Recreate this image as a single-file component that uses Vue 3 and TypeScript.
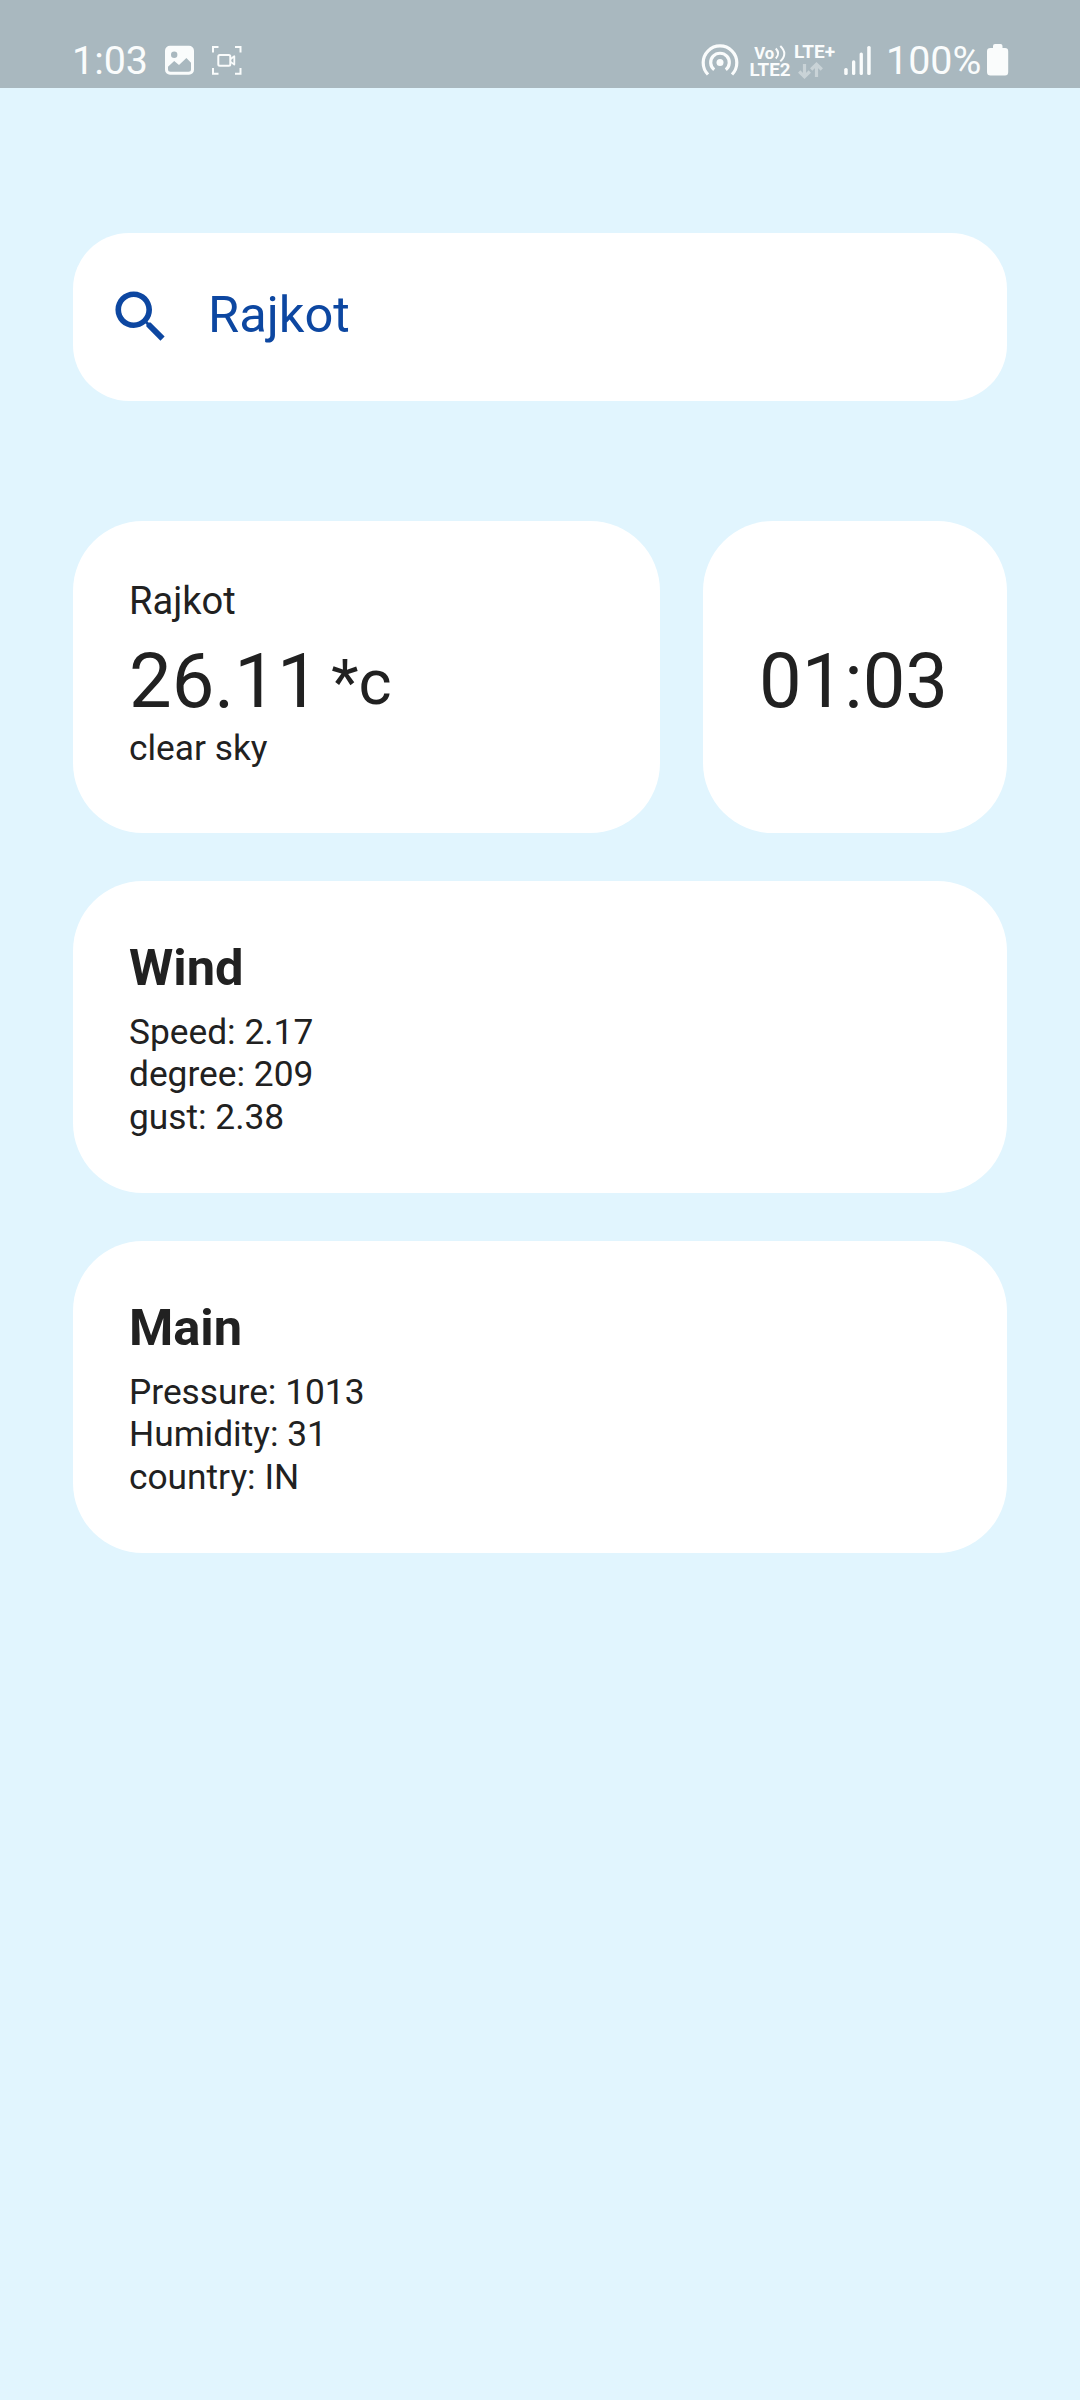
<script setup lang="ts">
interface InfoCard {
  title: string
  rows: { label: string; value: string }[]
}

const city = 'Rajkot'
const temperature = '26.11'
const sky = 'clear sky'
const clock = '01:03'

const cards: InfoCard[] = [
  {
    title: 'Wind',
    rows: [
      { label: 'Speed', value: '2.17' },
      { label: 'degree', value: '209' },
      { label: 'gust', value: '2.38' },
    ],
  },
  {
    title: 'Main',
    rows: [
      { label: 'Pressure', value: '1013' },
      { label: 'Humidity', value: '31' },
      { label: 'country', value: 'IN' },
    ],
  },
]
</script>

<template>
  <div class="screen">
    <header class="status">
      <div class="status-left">
        <span class="status-text time">1:03</span>
        <svg class="ic-photo" width="30" height="30" viewBox="0 0 30 30">
          <path
            fill="currentColor"
            fill-rule="evenodd"
            d="M5 .8h19a5 5 0 0 1 5 5v19a5 5 0 0 1-5 5H5a5 5 0 0 1-5-5v-19a5 5 0 0 1 5-5zM9.200 6.500a3.200 3.200 0 1 0 0 6.400a3.200 3.200 0 0 0 0-6.400zM3 21.800v2.500q0 2.500 2.500 2.500h18q2.500 0 2.500-2.500v-6.500l-4.600-4.700-7.400 7-4.800-4z"
          />
        </svg>
        <svg class="ic-record" width="30" height="30" viewBox="0 0 30 30" fill="none" stroke="currentColor" stroke-width="2">
          <path d="M1 7.500V2h5.500M23 2h5.500v5.500M28.500 23v5.700H23M6.500 28.700H1V23" />
          <rect x="6.300" y="10" width="12" height="10.800" rx="1.500" />
          <path d="M18.300 14.300l4-3v8.300l-4-3" stroke-width="1.800" stroke-linejoin="round" />
        </svg>
      </div>
      <div class="status-right">
        <svg class="ic-hotspot" width="38" height="34" viewBox="0 0 38 34" fill="none" stroke="currentColor" stroke-width="3.200">
          <circle cx="19" cy="19.500" r="3.500" fill="currentColor" stroke="none" />
          <path d="M13.200 26.800a9.300 9.300 0 1 1 11.600 0" />
          <path d="M7 31.500a16.800 16.800 0 1 1 24 0" />
        </svg>
        <svg class="ic-network" width="86" height="40" viewBox="0 0 86 40" fill="currentColor">
          <text x="4.300" y="18.800" font-size="17" textLength="20" lengthAdjust="spacingAndGlyphs">Vo</text>
          <path d="M25.800 8.500q4.600 5 0 10M30.300 6q8 7.700 0 15.400" fill="none" stroke="currentColor" stroke-width="2" />
          <text x="-.5" y="36.300" font-size="17.500" textLength="41" lengthAdjust="spacingAndGlyphs">LTE2</text>
          <text x="44" y="17.700" font-size="17.500" textLength="41" lengthAdjust="spacingAndGlyphs">LTE+</text>
          <path
            d="M54.500 24v11M49.200 31.500l5.300 5.300 5.300-5.300M66.500 37V26M61.200 29.500l5.300-5.300 5.300 5.300"
            fill="none"
            stroke="currentColor"
            stroke-width="3.200"
            opacity=".4"
          />
        </svg>
        <svg class="ic-signal" width="28" height="30" viewBox="0 0 28 30" fill="currentColor">
          <rect x="0.200" y="23" width="3.500" height="7" rx="1.600" />
          <rect x="8" y="15.300" width="3.300" height="14.700" rx="1.600" />
          <rect x="15.600" y="7.500" width="3.300" height="22.500" rx="1.600" />
          <rect x="23.200" y="1" width="3.500" height="29" rx="1.600" />
        </svg>
        <span class="status-text percent">100%</span>
        <svg class="ic-battery" width="22" height="32" viewBox="0 0 22 32" fill="currentColor">
          <path d="M8 0h5.500q2 0 2 2v2H18q3.200 0 3.200 3.200V28q0 3.500-3.200 3.500H3.500Q0 31.500 0 28V7.200Q0 4 3.500 4H6V2q0-2 2-2z" />
        </svg>
      </div>
    </header>

    <main class="content">
      <div class="search">
        <svg class="search-icon" viewBox="0 0 24 24" fill="currentColor">
          <path
            d="M15.500 14h-.79l-.28-.27C15.410 12.590 16 11.110 16 9.500 16 5.910 13.090 3 9.500 3S3 5.910 3 9.500 5.910 16 9.500 16c1.610 0 3.090-.59 4.230-1.570l.27.28v.79l5 4.990L20.490 19l-4.990-5zm-6 0C7.010 14 5 11.990 5 9.500S7.010 5 9.500 5 14 7.010 14 9.500 11.990 14 9.500 14z"
          />
        </svg>
        <span class="search-text">{{ city }}</span>
      </div>

      <div class="top-row">
        <section class="card weather">
          <div class="city">{{ city }}</div>
          <div class="temp">
            <span class="big">{{ temperature }}</span>
            <span class="unit">*c</span>
          </div>
          <div class="small">{{ sky }}</div>
        </section>
        <section class="card clock">
          <span class="big">{{ clock }}</span>
        </section>
      </div>

      <section v-for="card in cards" :key="card.title" class="card info">
        <h2 class="title">{{ card.title }}</h2>
        <div v-for="row in card.rows" :key="row.label" class="small">{{ row.label }}: {{ row.value }}</div>
      </section>
    </main>
  </div>
</template>

<style>
body {
  margin: 0;
  background: #e1f5fe;
}
</style>

<style scoped>
.screen {
  box-sizing: border-box;
  width: 1080px;
  height: 2400px;
  overflow: hidden;
  background: #e1f5fe;
  color: #212121;
  font-family: Roboto, 'Liberation Sans', sans-serif;
}

.status {
  box-sizing: border-box;
  display: flex;
  justify-content: space-between;
  height: 88px;
  padding: 40px 71px 0 72px;
  background: #a9b8bf;
  color: #fafcfc;
}

.status-left,
.status-right {
  display: flex;
  align-items: flex-start;
}

.status-text {
  flex: none;
  font-size: 39.4px;
  line-height: 42px;
}

.time {
  width: 76px;
}

.ic-photo {
  margin: 5px 0 0 17px;
}

.ic-record {
  margin: 5px 0 0 17px;
}

.ic-hotspot {
  margin-top: 3px;
}

.ic-network {
  margin-left: 11px;
  font-weight: 700;
}

.ic-signal {
  margin: 5px 0 0 8px;
}

.percent {
  width: 95px;
  margin-left: 14px;
}

.ic-battery {
  margin: 4px 0 0 6px;
}

.content {
  display: flex;
  flex-direction: column;
  gap: 48px;
  padding: 145px 73px 0;
}

.search {
  display: flex;
  align-items: center;
  box-sizing: border-box;
  height: 168px;
  margin-bottom: 72px;
  padding-left: 33.75px;
  gap: 33.75px;
  border-radius: 56px;
  background: #fff;
  color: #0d47a1;
}

.search-icon {
  width: 67.5px;
  height: 67.5px;
}

.search-text {
  font-size: 50.6px;
  line-height: 60px;
  margin-top: -4px;
}

.top-row {
  display: flex;
  gap: 43px;
}

.card {
  box-sizing: border-box;
  height: 312px;
  padding: 56px;
  border-radius: 70px;
  background: #fff;
}

.weather {
  width: 587px;
}

.city {
  margin-top: 1px;
  font-size: 38.1px;
  line-height: 46px;
}

.temp {
  display: flex;
  gap: 11.5px;
  margin-top: 13px;
  height: 90px;
}

.big {
  font-size: 75.9px;
  line-height: 89px;
}

.unit {
  font-size: 63.3px;
  line-height: 90px;
}

.small {
  font-size: 35.3px;
  line-height: 42.6px;
}

.clock {
  flex: 1;
  display: flex;
  align-items: center;
  white-space: nowrap;
}

.clock .big {
  margin-top: 9px;
}

.title {
  margin: 1px 0 13.6px;
  font-size: 50.6px;
  font-weight: 700;
  line-height: 59px;
}
</style>
